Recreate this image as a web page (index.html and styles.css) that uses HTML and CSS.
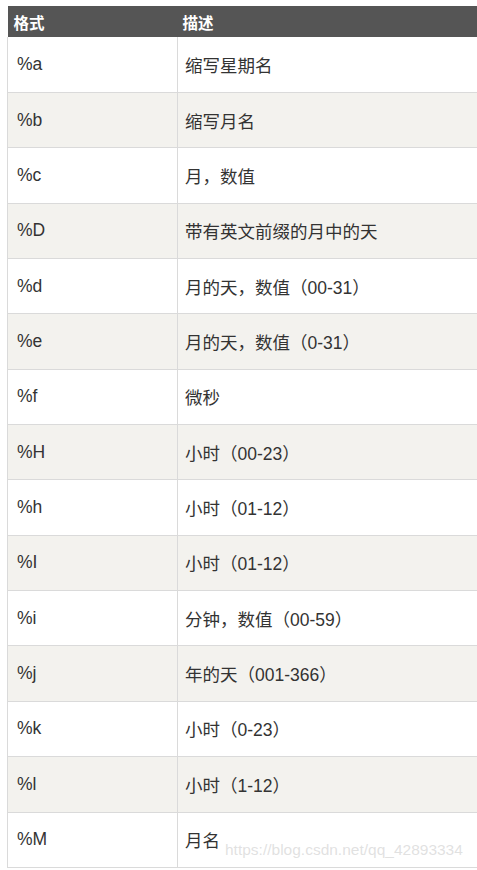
FILE: index.html
```html
<!DOCTYPE html>
<html lang="zh-CN">
<head>
<meta charset="utf-8">
<title>格式</title>
<link rel="stylesheet" href="styles.css">
</head>
<body>
<div class="wrap">
<table class="fmt">
<thead>
<tr><th class="c1">格式</th><th class="c2">描述</th></tr>
</thead>
<tbody>
<tr><td>%a</td><td>缩写星期名</td></tr>
<tr><td>%b</td><td>缩写月名</td></tr>
<tr><td>%c</td><td>月，数值</td></tr>
<tr><td>%D</td><td>带有英文前缀的月中的天</td></tr>
<tr><td>%d</td><td>月的天，数值（00-31）</td></tr>
<tr><td>%e</td><td>月的天，数值（0-31）</td></tr>
<tr><td>%f</td><td>微秒</td></tr>
<tr><td>%H</td><td>小时（00-23）</td></tr>
<tr><td>%h</td><td>小时（01-12）</td></tr>
<tr><td>%I</td><td>小时（01-12）</td></tr>
<tr><td>%i</td><td>分钟，数值（00-59）</td></tr>
<tr><td>%j</td><td>年的天（001-366）</td></tr>
<tr><td>%k</td><td>小时（0-23）</td></tr>
<tr><td>%l</td><td>小时（1-12）</td></tr>
<tr><td>%M</td><td>月名</td></tr>
</tbody>
</table>
<div class="watermark">https://blog.csdn.net/qq_42893334</div>
</div>
</body>
</html>
```
FILE: styles.css
```css
html, body {
  margin: 0;
  padding: 0;
  background: #fff;
  overflow: hidden;
}
body {
  width: 477px;
  height: 870px;
}
.wrap {
  position: relative;
  padding: 6px 0 0 7px;
  height: 864px;
}
.fmt {
  border-collapse: collapse;
  width: 471px;
  table-layout: fixed;
  font-family: "Liberation Sans", "Noto Sans CJK SC", sans-serif;
  font-size: 17.5px;
  color: #333;
}
.fmt th {
  background: #555;
  color: #fff;
  font-weight: bold;
  font-size: 15.5px;
  text-align: left;
  height: 31px;
  padding: 0 0 0 6px;
  box-sizing: border-box;
  vertical-align: middle;
}
.fmt th.c1 {
  width: 170px;
}
.fmt th.c2 {
  padding-left: 5px;
}
.fmt td {
  border: 1px solid #dadada;
  height: 55.36px;
  padding: 0 0 0 9px;
  box-sizing: border-box;
  vertical-align: middle;
}
.fmt td:last-child {
  padding-left: 7px;
  border-right: none;
}
.fmt tbody tr:nth-child(even) td {
  background: #f3f2ee;
}
.fmt tbody tr:first-child td {
  border-top: none;
}
.watermark {
  position: absolute;
  left: 225px;
  top: 841px;
  font-family: "Liberation Sans", sans-serif;
  font-size: 15.5px;
  color: rgba(200, 200, 200, 0.55);
  white-space: nowrap;
}
```
